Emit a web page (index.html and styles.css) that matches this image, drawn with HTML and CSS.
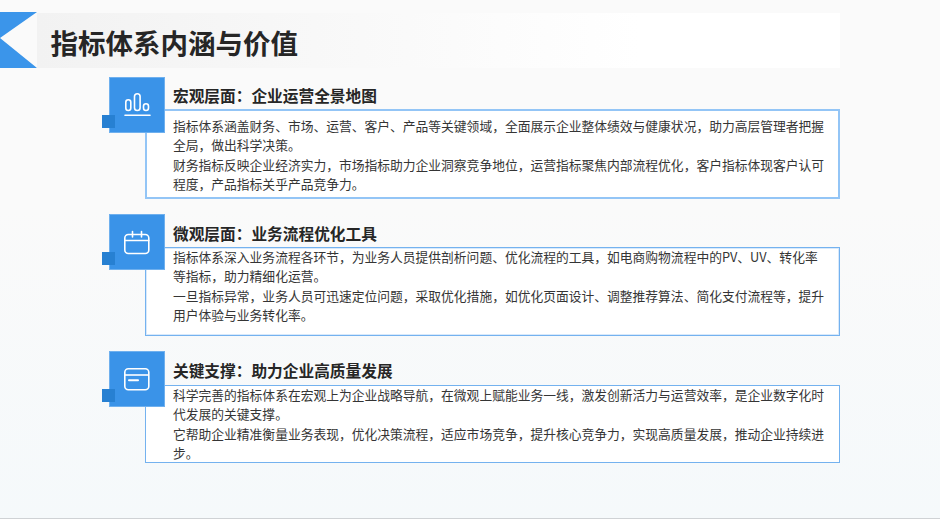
FILE: index.html
```html
<!DOCTYPE html>
<html lang="zh-CN">
<head>
<meta charset="utf-8">
<title>指标体系内涵与价值</title>
<link rel="stylesheet" href="styles.css">
</head>
<body>
<div class="slide">
  <header class="header">
    <svg class="ribbon" width="37" height="56" viewBox="0 0 37 56"><polygon points="0,0 37,0 0,26 37,56 0,56" fill="#3b95ea"/></svg>
    <h1 class="title">指标体系内涵与价值</h1>
  </header>
  <main class="sections">
    <section class="item">
      <div class="badge">
        <svg width="56" height="56" viewBox="0 0 56 56" fill="none" stroke="#fff" stroke-width="1.6">
          <rect x="16.8" y="22.8" width="5" height="10.7" rx="2.5"/>
          <rect x="25.5" y="16.8" width="5.6" height="16.7" rx="2.8"/>
          <rect x="34.5" y="26.8" width="5" height="6.7" rx="2.5"/>
          <path d="M16 38.3H41" stroke-linecap="round"/>
        </svg>
        <span class="tab"></span>
      </div>
      <h2 class="item-title">宏观层面<span class="colon">：</span>企业运营全景地图</h2>
      <div class="card card-a">
        <p>指标体系涵盖财务、市场、运营、客户、产品等关键领域，全面展示企业整体绩效与健康状况，助力高层管理者把握全局，做出科学决策。</p>
        <p>财务指标反映企业经济实力，市场指标助力企业洞察竞争地位，运营指标聚焦内部流程优化，客户指标体现客户认可程度，产品指标关乎产品竞争力。</p>
      </div>
    </section>
    <section class="item">
      <div class="badge">
        <svg width="56" height="56" viewBox="0 0 56 56" fill="none" stroke="#fff" stroke-width="1.6">
          <rect x="15.8" y="20.5" width="24" height="19" rx="3.5"/>
          <path d="M15.8 26.5H39.8M23.5 17.5V23M32.5 17.5V23" stroke-linecap="round"/>
        </svg>
        <span class="tab"></span>
      </div>
      <h2 class="item-title">微观层面<span class="colon">：</span>业务流程优化工具</h2>
      <div class="card card-b">
        <p>指标体系深入业务流程各环节，为业务人员提供剖析问题、优化流程的工具，如电商购物流程中的PV、UV、转化率等指标，助力精细化运营。</p>
        <p>一旦指标异常，业务人员可迅速定位问题，采取优化措施，如优化页面设计、调整推荐算法、简化支付流程等，提升用户体验与业务转化率。</p>
      </div>
    </section>
    <section class="item">
      <div class="badge">
        <svg width="56" height="56" viewBox="0 0 56 56" fill="none" stroke="#fff" stroke-width="1.6">
          <rect x="15.8" y="17.8" width="24" height="21" rx="3.5"/>
          <path d="M15.8 24H39.8"/>
          <path d="M20 29.2H29" stroke-width="2" stroke-linecap="round"/>
        </svg>
        <span class="tab"></span>
      </div>
      <h2 class="item-title">关键支撑<span class="colon">：</span>助力企业高质量发展</h2>
      <div class="card card-c">
        <p>科学完善的指标体系在宏观上为企业战略导航，在微观上赋能业务一线，激发创新活力与运营效率，是企业数字化时代发展的关键支撑。</p>
        <p>它帮助企业精准衡量业务表现，优化决策流程，适应市场竞争，提升核心竞争力，实现高质量发展，推动企业持续进步。</p>
      </div>
    </section>
  </main>
</div>
</body>
</html>
```
FILE: styles.css
```css
* { box-sizing: border-box; }
html, body { margin: 0; padding: 0; }
body { font-family: "Noto Sans CJK SC", "Noto Sans", sans-serif; }
.slide {
  width: 940px;
  height: 519px;
  padding-top: 12px;
  overflow: hidden;
  background: linear-gradient(180deg, #fafafa 0%, #fafafa 40%, #f5f9fb 100%);
  border-bottom: 1px solid #cfd2d5;
}
.header { display: flex; width: 840px; height: 56px; }
.ribbon { display: block; flex: none; }
.title {
  flex: 1;
  margin: 1px 0 0;
  padding-left: 13.5px;
  font-size: 27.5px;
  font-weight: 700;
  line-height: 58px;
  height: 55px;
  color: #262626;
  background: linear-gradient(90deg, #f2f2f2 0%, #ffffff 75%);
}
.sections {
  display: flex;
  flex-direction: column;
  gap: 15px;
  width: 731px;
  margin: 9px 0 0 109px;
}
.item { position: relative; padding-left: 36px; }
.badge {
  position: absolute;
  left: 0;
  top: 0;
  z-index: 1;
  width: 56px;
  height: 56px;
  background: #3a93e8;
  box-shadow: inset 0 0 0 1px #6fb0ee;
}
.badge svg { display: block; }
.tab {
  position: absolute;
  left: -7px;
  top: 38px;
  width: 13px;
  height: 13px;
  background: #2780d2;
}
.item-title {
  height: 33px;
  margin: 0;
  padding: 7.5px 0 0 28px;
  font-size: 15.7px;
  font-weight: 700;
  line-height: 24px;
  color: #262626;
}
.item:first-child .item-title { padding-top: 6.5px; }
.colon { font-family: "Noto Sans CJK TC", "Noto Sans CJK SC", sans-serif; }
.card {
  padding: 0 10px 0 27px;
  background: #fff;
  border: 1px solid #74b2ef;
  box-shadow: inset 0 0 0 1px #d8e9fb;
  font-size: 12.78px;
  line-height: 19.25px;
  color: #353535;
}
.card-a {
  height: 90px;
  margin-top: -1px;
  padding: 6px 9px 0 26px;
  border: 2px solid #93c5f6;
  box-shadow: none;
}
.card-b { height: 89px; }
.card-c { height: 78px; margin-top: 1px; box-shadow: none; }
.card p { margin: 0; }
.card p:first-child { margin-top: -1px; }
```
